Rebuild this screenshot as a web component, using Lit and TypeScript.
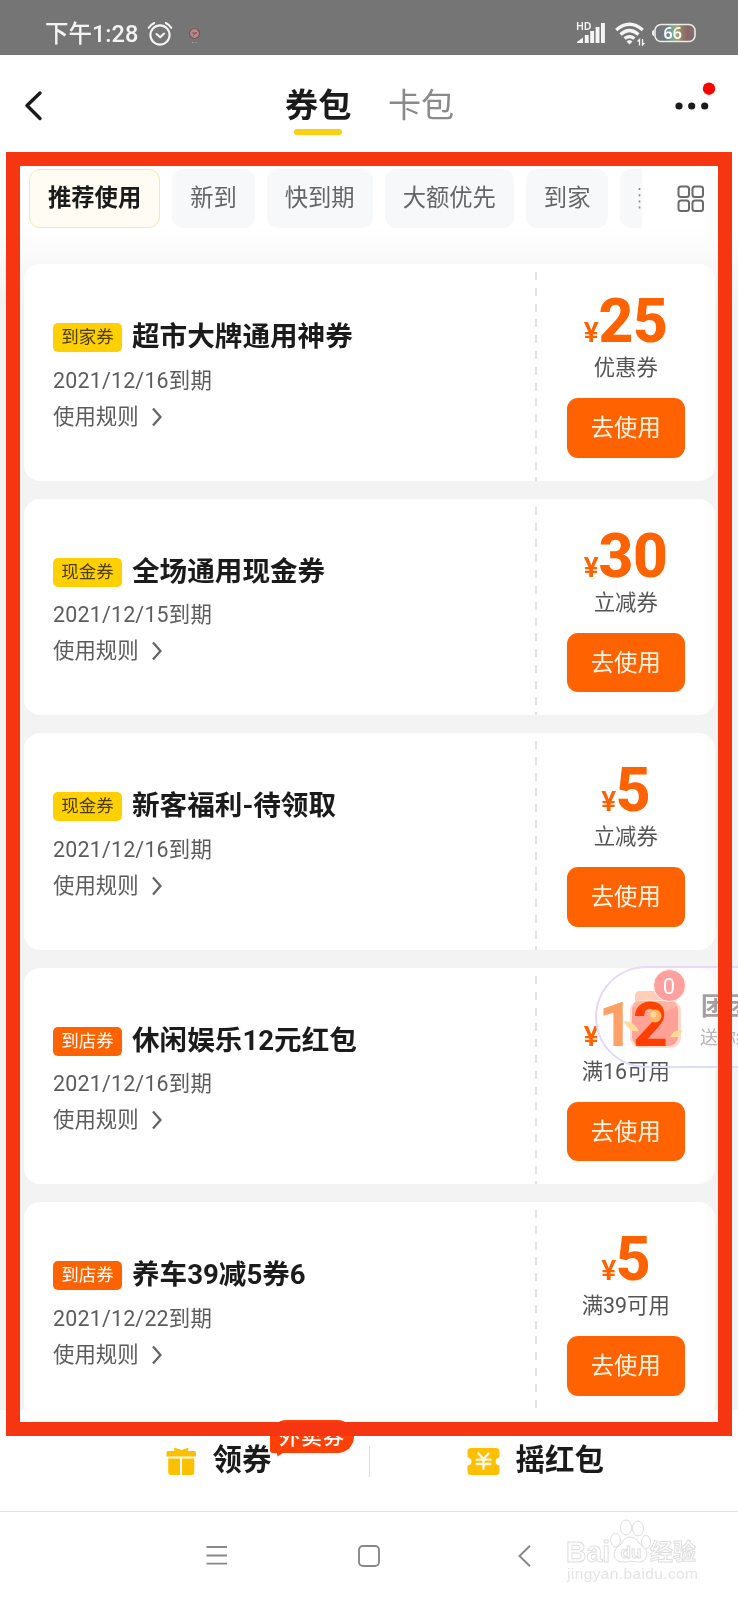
import { LitElement, html, css } from "lit";
import { customElement, property } from "lit/decorators.js";

interface Coupon {
  tag: string;
  tone: "yellow" | "orange";
  title: string;
  date: string;
  amount: string;
  note: string;
}

const coupons: Coupon[] = [
  { tag: "到家券", tone: "yellow", title: "超市大牌通用神券", date: "2021/12/16到期", amount: "25", note: "优惠券" },
  { tag: "现金券", tone: "yellow", title: "全场通用现金券", date: "2021/12/15到期", amount: "30", note: "立减券" },
  { tag: "现金券", tone: "yellow", title: "新客福利-待领取", date: "2021/12/16到期", amount: "5", note: "立减券" },
  { tag: "到店券", tone: "orange", title: "休闲娱乐12元红包", date: "2021/12/16到期", amount: "12", note: "满16可用" },
  { tag: "到店券", tone: "orange", title: "养车39减5券6", date: "2021/12/22到期", amount: "5", note: "满39可用" },
];

@customElement("status-bar")
class StatusBar extends LitElement {
  static styles = css`
    :host { display: flex; align-items: center; height: 54.5px; padding: 13.500px 0 0 45px; box-sizing: border-box; background: #757575; color: #f4f4f4; }
    .time { font-size: 23.5px; line-height: 30px; width: 92px; white-space: nowrap; font-weight: 500; }
    .alarm { margin-left: 10px; }
    .app { margin-left: 10px; flex: none; }
    .right { margin-left: auto; display: flex; margin-right: 40px; }
    .hd { font: 600 10.500px "Noto Sans", sans-serif; }
    .num { font: 600 16px "Noto Sans", sans-serif; }
  `;
  render() {
    return html`
      <span class="time">下午1:28</span>
      <svg class="alarm" width="26" height="26" viewBox="0 0 26 26" fill="none" stroke="#f4f4f4" stroke-width="2.1" stroke-linecap="round" stroke-linejoin="round">
        <circle cx="13" cy="14" r="9.6" /><path d="M9.500 13l3.700 3.300 3.900-3.700M1.800 6.800Q4 3.400 7.200 2M24.200 6.800Q22 3.400 18.800 2" />
      </svg>
      <svg class="app" width="20" height="22" viewBox="0 0 20 22">
        <path d="M3 7L10 2L14 5L8 10Z" fill="#7c7870" />
        <circle cx="11.500" cy="10.500" r="5" fill="#b08d8d" stroke="#7e5157" stroke-width="1.200" />
        <path d="M9 10h5M10 13l3.500-4" stroke="#8a4a52" fill="none" />
        <path d="M9 19.500h1.500M12.500 19.500h1" stroke="#aaa" />
      </svg>
      <div class="right">
        <svg width="122" height="28" viewBox="0 0 122 28">
          <text class="hd" x="0" y="10" fill="#f4f4f4" textLength="15.500">HD</text>
          <g fill="#f4f4f4">
            <path d="M1 23V22L7 17.500V23Z" /><rect x="8.800" y="15" width="3.900" height="8" /><rect x="14.200" y="11" width="3.900" height="12" /><rect x="19.600" y="7" width="3.900" height="16" /><rect x="25" y="3" width="3.900" height="20" />
          </g>
          <g fill="none" stroke="#f4f4f4" stroke-width="3.200">
            <path d="M40.200 10Q53.500-1.500 66.800 10M44.500 14.500Q53.500 6.500 62.500 14.500M48.600 18.600Q53.500 14.500 58.400 18.600" />
          </g>
          <path d="M50.500 21.500Q53.500 18.500 56.500 21.500L53.500 24.500Z" fill="#f4f4f4" />
          <path d="M63.500 25.500V19.500L61.500 21.500M66.500 19V25L68.500 23" fill="none" stroke="#f4f4f4" stroke-width="1.300" />
          <defs><linearGradient id="b"><stop offset="0" stop-color="#757575" /><stop offset=".28" stop-color="#6f7a86" /><stop offset=".42" stop-color="#72a59b" /><stop offset=".55" stop-color="#a8a766" /><stop offset=".68" stop-color="#8d7d68" /><stop offset=".82" stop-color="#8b636a" /><stop offset="1" stop-color="#757575" /></linearGradient></defs>
          <rect x="79" y="4.500" width="40" height="17" rx="6" fill="url(#b)" stroke="#ecebe6" stroke-width="1.600" />
          <path d="M78 10Q76 10 76 13Q76 16 78 16Z" fill="#f4f4f4" />
          <text class="num" x="87.500" y="18.800" fill="#fafafa" textLength="18.500">66</text>
        </svg>
      </div>`;
  }
}

@customElement("coupon-card")
class CouponCard extends LitElement {
  @property({ attribute: false }) data!: Coupon;
  static styles = css`
    :host { display: flex; height: 216.600px; flex: none; border-radius: 16px; background: #fff; }
    .info { flex: 1; padding: 54px 0 0 29.500px; }
    .head { display: flex; align-items: center; gap: 10px; height: 38px; }
    .tag { width: 69px; height: 29px; line-height: 29px; border-radius: 5px; text-align: center; font-size: 17.500px; margin-top: 1px; box-sizing: border-box; }
    .yellow { background: #ffd000; color: #4a3c08; }
    .orange { background: #ff6200; color: #fff; }
    .title { font-size: 27.600px; line-height: 36px; font-weight: 700; color: #1b1b1b; white-space: nowrap; }
    .sub { font-size: 21.400px; color: #5c5c5c; line-height: 36px; height: 36px; display: flex; align-items: center; gap: 13px; }
    .date { letter-spacing: .2px; margin-top: 6.500px; }
    .line { width: 2px; margin-top: 8px; background: repeating-linear-gradient(#e2e2e4 0 8px, transparent 8px 15.800px); }
    .side { width: 177.500px; display: flex; flex-direction: column; align-items: center; }
    .price { display: flex; align-items: baseline; font-family: Roboto, sans-serif; font-weight: 800; color: #ff6200; height: 60px; line-height: 60px; margin-top: 28px; font-size: 60.500px; letter-spacing: -.3px; }
    .yen { font-size: 28px; font-weight: 600; }
    .note { font-size: 21.400px; line-height: 30px; color: #555; margin-top: 1px; }
    .btn { width: 118.500px; height: 59.500px; margin-top: 15px; border-radius: 11px; background: #ff6200; color: #fff6e6; font-size: 23.300px; line-height: 61px; text-align: center; }
  `;
  render() {
    const d = this.data;
    return html`
      <div class="info">
        <div class="head"><span class="tag ${d.tone}">${d.tag}</span><span class="title">${d.title}</span></div>
        <div class="sub date">${d.date}</div>
        <div class="sub rule">使用规则
          <svg width="10" height="20" viewBox="0 0 10 20" fill="none" stroke="#666" stroke-width="2.400"><path d="M1 1.500L8.500 10L1 18.500" /></svg>
        </div>
      </div>
      <div class="line"></div>
      <div class="side">
        <div class="price"><span class="yen">¥</span><span>${d.amount}</span></div>
        <div class="note">${d.note}</div>
        <div class="btn">去使用</div>
      </div>`;
  }
}

@customElement("app-root")
class AppRoot extends LitElement {
  static styles = css`
    :host { display: flex; flex-direction: column; position: relative; width: 738px; height: 1600px; overflow: hidden; background: #fff; font-family: Roboto, "Noto Sans CJK SC", sans-serif; }
    .header { height: 97.500px; flex: none; display: grid; grid-template-columns: 285px 1fr auto; }
    .back { margin: 35.500px 0 0 24px; }
    .tabs { display: flex; gap: 36.500px; padding-top: 27px; }
    .tab { font-size: 33.200px; line-height: 48px; height: 52px; color: #8a8a8a; display: flex; flex-direction: column; align-items: center; }
    .on { color: #1b1b1b; font-weight: 700; }
    .bar { width: 48px; height: 6px; flex: none; border-radius: 3px; background: #fbd014; margin-top: -1px; }
    .more { margin: 27px 20px 0 0; }
    .filters { height: 112px; flex: none; padding: 17px 0 0 29px; box-sizing: border-box; display: flex; align-items: flex-start; background: linear-gradient(#fff 75px, #f8f8f8 112px); }
    .scroll { display: flex; gap: 12px; width: 613px; overflow: hidden; flex: none; }
    .chip { flex: none; height: 59px; line-height: 59px; padding: 0 18px; font-size: 23.300px; border-radius: 11px; background: #f7f8fa; color: #666; box-sizing: border-box; min-width: 82px; }
    .sel { line-height: 57px; border: 1px solid #f6e9a5; background: #fffcf4; color: #1b1b1b; font-weight: 700; }
    .dots { display: block; margin-top: 18px; }
    .grid { margin: 16px 0 0 35px; }
    .list { height: 1146px; flex: none; box-sizing: border-box; padding: 0 23.500px; overflow: hidden; display: flex; flex-direction: column; gap: 18px; background: linear-gradient(#f8f8f8, #f3f3f4 40px); }
    .bottom { height: 102px; flex: none; box-sizing: border-box; border-bottom: 1px solid #e3e3e3; display: grid; grid-template-columns: 1fr 1px 1fr; background: #fff; }
    .act { display: flex; height: 100px; align-items: flex-start; }
    .act svg { margin-top: 37px; }
    .act span { font-size: 29.500px; font-weight: 700; line-height: 40px; margin-top: 30px; color: #1b1b1b; margin-left: 15.500px; }
    .get { padding-left: 166px; }
    .shake { padding-left: 97px; }
    .shake span { margin-left: 16px; }
    .sep { background: #dcdcdc; height: 31px; margin-top: 36px; }
    .badge { position: absolute; left: 270px; top: 1420px; width: 84px; height: 33px; border-radius: 17px 17px 17px 3px; background: #ff4106; color: #fff; font-size: 21px; font-weight: 500; line-height: 35px; text-align: center; letter-spacing: 1px; }
    .tail { position: absolute; left: 6px; top: 28px; }
    .nav { height: 88px; flex: none; display: flex; align-items: flex-start; padding: 33px 0 0 206px; box-sizing: border-box; }
    .home { margin-left: 130px; }
    .prev { margin-left: 137px; }
    .float { position: absolute; left: 595px; top: 965.500px; width: 200px; height: 102.500px; box-sizing: border-box; border: 2px solid; border-color: #ead8f8 #e6d3f8 #dcdcfb #e6d6fa; border-radius: 52px; background: linear-gradient(90deg, rgba(255, 255, 255, .4) 32px, rgba(255, 255, 255, 0) 33px 84px, rgba(253, 251, 255, .6) 85px); }
    .pack { position: absolute; left: 21px; top: 16px; mix-blend-mode: multiply; }
    .coins { position: absolute; left: 21px; top: 16px; }
    .count { position: absolute; left: 55.500px; top: 1px; width: 33px; height: 33px; border-radius: 50%; background: #ffa09e; color: #fff; font-size: 22px; line-height: 33px; text-align: center; border: 1px solid #fff3f0; box-sizing: border-box; }
    .ft { position: absolute; left: 104px; top: 24px; font-size: 25px; line-height: 30px; font-weight: 700; color: #a79ea2; white-space: nowrap; }
    .fs { position: absolute; left: 103px; top: 57px; font-size: 18px; line-height: 26px; color: #b9b3b8; white-space: nowrap; }
    .frame { position: absolute; left: 6px; top: 152px; width: 726px; height: 1284px; box-sizing: border-box; border: 14px solid #f63511; }
    .mark { position: absolute; left: 563px; top: 1516px; }
    .m1 { font: 700 29px "Liberation Sans", sans-serif; }
    .m2 { font: 700 23px "Noto Sans CJK SC", sans-serif; }
    .m3 { font: 400 15.500px "Liberation Sans", sans-serif; }
    .m4 { font: 700 17px "Liberation Sans", sans-serif; }
  `;

  render() {
    const chips = ["推荐使用", "新到", "快到期", "大额优先", "到家"];
    return html`
      <status-bar></status-bar>
      <div class="header">
        <svg class="back" width="20" height="32" viewBox="0 0 20 32" fill="none" stroke="#1b1b1b" stroke-width="3.400" stroke-linecap="round" stroke-linejoin="round"><path d="M16 3L3 15.500L16 28.500" /></svg>
        <div class="tabs">
          <div class="tab on">券包<i class="bar"></i></div>
          <div class="tab">卡包</div>
        </div>
        <svg class="more" width="45" height="32" viewBox="0 0 45 32">
          <g fill="#1b1b1b"><circle cx="6" cy="24" r="3.600" /><circle cx="18.700" cy="24" r="3.600" /><circle cx="31.700" cy="24" r="3.600" /></g>
          <circle cx="36" cy="6.700" r="6.200" fill="#f90500" />
        </svg>
      </div>
      <div class="filters">
        <div class="scroll">
          ${chips.map((c, i) => html`<div class="chip ${i === 0 ? "sel" : ""}">${c}</div>`)}
          <div class="chip"><svg class="dots" width="3" height="22" viewBox="0 0 3 22"><path d="M1.500 1V21.500" stroke="#888" stroke-dasharray="2 4.200" stroke-width="1.600" /></svg></div>
        </div>
        <svg class="grid" width="28" height="28" viewBox="0 0 28 28" fill="none" stroke="#6a6a6a" stroke-width="2">
          <rect x="1.500" y="1.500" width="10.500" height="10.500" rx="2.500" /><rect x="15.500" y="1.500" width="10.500" height="10.500" rx="2.500" /><rect x="1.500" y="15.500" width="10.500" height="10.500" rx="2.500" /><rect x="15.500" y="15.500" width="10.500" height="10.500" rx="2.500" />
        </svg>
      </div>
      <div class="list">${coupons.map((c) => html`<coupon-card .data=${c}></coupon-card>`)}</div>
      <div class="bottom">
        <div class="act get">
          <svg width="31" height="29" viewBox="0 0 31 29" fill="#fdc000"><path d="M2 4H8.500L8 1.500Q8 .5 9.500 1L15.500 3L21.500 1Q23 .5 22.500 1.500L21.800 4H28.500Q30 4 30 5.500V9.500H.500V5.500Q.500 4 2 4ZM2.200 11.500H14V28H5Q2.200 28 2.200 25ZM16 11.500H28.300V25Q28.300 28 25.500 28H16Z" /></svg>
          <span>领券</span>
        </div>
        <i class="sep"></i>
        <div class="act shake">
          <svg width="33" height="29" viewBox="0 0 33 29"><path d="M4 1H29Q32.500 1 32.500 4.500V10.500Q28.500 11 28.500 14.500T32.500 18.500V24.500Q32.500 28 29 28H4Q.500 28 .500 24.500V18.500Q4.500 18 4.500 14.500T.500 10.500V4.500Q.500 1 4 1Z" fill="#fdc000" /><path d="M11.500 6.500L16.500 12L21.500 6.500M9.500 12.700H23.500M9.500 17H23.500M16.500 12V22" stroke="#fff8e0" stroke-width="2.300" stroke-linecap="round" fill="none" /></svg>
          <span>摇红包</span>
        </div>
      </div>
      <div class="nav">
        <svg width="22" height="22" viewBox="0 0 22 22" stroke="#888" stroke-width="1.800"><path d="M.500 2H21M.500 10.500H21M.500 18.700H21" /></svg>
        <svg class="home" width="22" height="22" viewBox="0 0 22 22" fill="none" stroke="#888" stroke-width="1.900"><rect x="1" y="1" width="20" height="20" rx="4" /></svg>
        <svg class="prev" width="14" height="22" viewBox="0 0 14 22" fill="none" stroke="#888" stroke-width="1.900"><path d="M13 .800L2.500 11L13 21.200" /></svg>
      </div>

      <div class="float">
        <svg class="pack" width="66" height="66" viewBox="0 0 66 66">
          <path d="M17 20V12Q17 7 22 7H48Q53 7 55 18Z" fill="#ffcdb8" />
          <rect x="12" y="16" width="51" height="48" rx="11" fill="#ffddce" />
          <rect x="14" y="17" width="46" height="45" rx="9" fill="#ffa196" />
          <path d="M15 22Q16 17 22 17H52Q58 17 59 22Q37 36 15 22Z" fill="#ffb5a2" />
        </svg>
        <svg class="coins" width="66" height="66" viewBox="0 0 66 66">
          <circle cx="37" cy="32" r="6.500" fill="#ffb56a" /><circle cx="35.500" cy="30.500" r="3" fill="#ffd79c" />
          <path d="M6 37Q15 36 21 47Q11 49 6 37ZM52 53Q56 45 64 46Q63 55 52 53Z" fill="#ffdb98" />
        </svg>
        <span class="ft">团团赚</span><span class="fs">送你红包</span>
        <span class="count">0</span>
      </div>
      <div class="badge">外卖券<svg class="tail" width="14" height="9" viewBox="0 0 14 9"><path d="M0 0L1.500 8.500L10 3V0Z" fill="#ff4106" /></svg></div>
      <div class="frame"></div>
      <svg class="mark" width="142" height="70" viewBox="0 0 142 70" fill="#fefefe" stroke="#dedede" stroke-width="1">
        <text class="m1" x="3" y="46" textLength="44" lengthAdjust="spacingAndGlyphs">Bai</text>
        <ellipse cx="52.500" cy="24" rx="4.800" ry="7" /><ellipse cx="63" cy="11.500" rx="5.500" ry="7.500" /><ellipse cx="75" cy="12.500" rx="5.500" ry="7.500" /><ellipse cx="83" cy="26" rx="4.500" ry="6.500" />
        <path d="M67 21Q73 21 76 27Q84 33 84 38Q83 47 74 46Q68 44.500 62 46Q52 47 51 39Q51 33 58 28Q61 21 67 21Z" />
        <text class="m4" x="57.500" y="42" fill="#fff">du</text>
        <text class="m2" x="87" y="44" textLength="46">经验</text>
        <text class="m3" x="4" y="62.500" textLength="131" stroke="none" fill="#e4e4e4">jingyan.baidu.com</text>
      </svg>`;
  }
}
